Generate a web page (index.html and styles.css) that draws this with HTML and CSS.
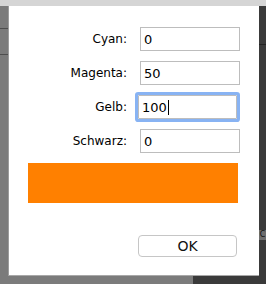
FILE: index.html
```html
<!DOCTYPE html>
<html>

<head>
    <title>CMYK</title>
    <link rel="stylesheet" href="styles.css">
</head>

<body>
    <div class="screen">
        <div class="top-strip"></div>
        <div class="left-pane">
            <div class="pane-line line-a"></div>
            <div class="pane-line line-b"></div>
        </div>
        <div class="right-pane">
            <div class="pane-line line-c"></div>
            <span class="peek">C</span>
        </div>
        <div class="bottom-dark"></div>

        <div class="dialog">
            <div class="fields">
                <label for="cyan">Cyan:</label>
                <input type="text" id="cyan" value="0">
                <label for="magenta">Magenta:</label>
                <input type="text" id="magenta" value="50">
                <label for="gelb">Gelb:</label>
                <div class="focused"><span>100</span><i class="caret"></i></div>
                <label for="schwarz">Schwarz:</label>
                <input type="text" id="schwarz" value="0">
            </div>
            <div class="swatch"></div>
            <div class="actions">
                <button type="button">OK</button>
            </div>
        </div>
    </div>
</body>

</html>
```

FILE: styles.css
```css
html, body {
    margin: 0;
    padding: 0;
}

body {
    font-family: "DejaVu Sans", "Liberation Sans", sans-serif;
    background-color: #7b7b7b;
}

.screen {
    position: relative;
    width: 266px;
    height: 284px;
    overflow: hidden;
    background-color: #7b7b7b;
}

.top-strip {
    height: 6px;
    background-color: #d5d5d5;
}

.left-pane {
    position: absolute;
    left: 0;
    top: 6px;
    width: 8px;
    height: 270px;
}

.pane-line {
    position: absolute;
    left: 0;
    right: 0;
    height: 1px;
    background-color: #4e4e4e;
}

.line-a { top: 22px; }
.line-b { top: 48px; }
.line-c { top: 38px; background-color: #222; }

.right-pane {
    position: absolute;
    right: 0;
    top: 6px;
    width: 7px;
    bottom: 0;
    background-color: #3a3a3a;
}

.peek {
    position: absolute;
    left: 0;
    top: 224px;
    width: 7px;
    font-size: 8px;
    line-height: 10px;
    text-align: center;
    color: #111;
    background-color: #6e6e6e;
}

.bottom-dark {
    position: absolute;
    left: 193px;
    right: 0;
    bottom: 0;
    height: 8px;
    background-color: #3a3a3a;
}

.dialog {
    position: absolute;
    left: 8px;
    top: 6px;
    width: 251px;
    height: 270px;
    box-sizing: border-box;
    background-color: #fff;
    border-left: 1px solid #9c9c9c;
    border-bottom: 1px solid #a8a8a8;
    padding: 21px 0 0 0;
}

.fields {
    display: grid;
    grid-template-columns: 118px 100px;
    column-gap: 13px;
    row-gap: 10px;
    align-items: center;
}

label {
    text-align: right;
    font-size: 12px;
    color: #000;
}

input,
.focused {
    width: 100px;
    height: 24px;
    box-sizing: border-box;
    border: 1px solid #bdbdbd;
    padding: 0 3px;
    margin: 0;
    font-family: "DejaVu Sans", sans-serif;
    font-size: 13px;
    color: #000;
    outline: none;
    border-radius: 0;
}

.focused {
    display: flex;
    align-items: center;
    width: 99px;
    margin-left: -2px;
    box-shadow: 0 0 0 3px #88b3f3;
    border-radius: 1px;
}

.caret {
    display: inline-block;
    width: 1px;
    height: 15px;
    margin-left: 1px;
    background-color: #000;
}

.swatch {
    margin: 10px 0 0 19px;
    width: 210px;
    height: 40px;
    background-color: #ff8000;
}

.actions {
    margin-top: 32px;
    padding-left: 129px;
}

button {
    width: 99px;
    height: 22px;
    box-sizing: border-box;
    background-color: #fff;
    border: 1px solid #c6c6c6;
    border-radius: 4px;
    font-family: "DejaVu Sans", sans-serif;
    font-size: 14px;
    color: #111;
    padding: 0;
}
```
